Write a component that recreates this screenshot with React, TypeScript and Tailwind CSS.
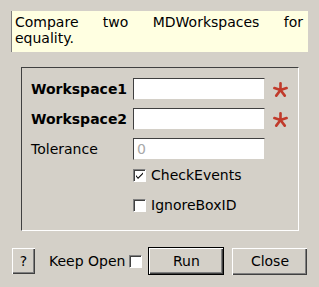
import React from "react";

const font = { fontFamily: '"DejaVu Sans", Verdana, sans-serif' };

function Asterisk() {
  return (
    <svg width="15" height="15" viewBox="0 0 16 16" className="ml-[8px]">
      <g stroke="#c13b2c" strokeWidth="2.8" strokeLinecap="round">
        <line x1="8" y1="8.5" x2="8" y2="1.5" />
        <line x1="8" y1="8.5" x2="1.5" y2="6.5" />
        <line x1="8" y1="8.5" x2="14.5" y2="6.5" />
        <line x1="8" y1="8.5" x2="3.5" y2="14.5" />
        <line x1="8" y1="8.5" x2="12.5" y2="14.5" />
      </g>
    </svg>
  );
}

function Check({ checked }: { checked?: boolean }) {
  return (
    <span className="flex h-[13px] w-[13px] items-center justify-center border border-t-[#808080] border-l-[#808080] border-b-white border-r-white bg-white shadow-[inset_1px_1px_0_#404040]">
      {checked && (
        <svg width="9" height="9" viewBox="0 0 9 9">
          <path d="M1 4 L3 6.5 L8 1.5 L8 3 L3 8 L1 5.5 Z" fill="#000" />
        </svg>
      )}
    </span>
  );
}

function Field({ label, bold, value, required }: { label: string; bold?: boolean; value?: string; required?: boolean }) {
  return (
    <div className="flex h-[22px] items-center">
      <span className={`w-[102px] text-[14px] text-black ${bold ? "font-bold" : ""}`}>{label}</span>
      <div className="flex h-[22px] w-[132px] items-center border border-t-[#404040] border-l-[#404040] border-b-[#d4d0c8] border-r-[#d4d0c8] bg-white pl-[3px] text-[14px] text-[#a8a8a8]">
        {value}
      </div>
      {required && <Asterisk />}
    </div>
  );
}

function Button({ children, width, primary }: { children: React.ReactNode; width: string; primary?: boolean }) {
  return (
    <button
      className={`flex items-center justify-center text-[14px] text-black ${width} ${
        primary
          ? "h-[28px] border border-black shadow-[inset_1px_1px_0_#fff,inset_-1px_-1px_0_#404040,inset_-2px_-2px_0_#808080]"
          : "h-[27px] shadow-[inset_1px_1px_0_#fff,inset_-1px_-1px_0_#404040,inset_-2px_-2px_0_#808080]"
      }`}
    >
      {children}
    </button>
  );
}

export default function App() {
  return (
    <div className="flex h-[287px] w-[319px] flex-col bg-[#d4d0c8] pt-[11px]" style={font}>
      <div className="ml-[11px] h-[41px] w-[297px] border-l border-[#808080] bg-[#ffffe1] pl-[3px] pr-[5px] pt-[3px] text-[14px] leading-[16px] text-black">
        <div className="flex justify-between">
          <span>Compare</span>
          <span>two</span>
          <span>MDWorkspaces</span>
          <span>for</span>
        </div>
        <div>equality.</div>
      </div>

      <div className="ml-[21px] mt-[15px] h-[164px] w-[278px] border border-t-[#404040] border-l-[#404040] border-b-white border-r-white pl-[9px] pt-[10px]">
        <div className="flex flex-col gap-[8px]">
          <Field label="Workspace1" bold required />
          <Field label="Workspace2" bold required />
          <Field label="Tolerance" value="0" />
        </div>
        <div className="mt-[4px] flex flex-col gap-[8px] pl-[102px]">
          <div className="flex h-[22px] items-center gap-[5px] text-[14px] text-black">
            <Check checked />
            <span>CheckEvents</span>
          </div>
          <div className="flex h-[22px] items-center gap-[5px] text-[14px] text-black">
            <Check />
            <span>IgnoreBoxID</span>
          </div>
        </div>
      </div>

      <div className="mt-[16px] flex items-center pl-[12px]">
        <Button width="w-[23px] !h-[26px]">?</Button>
        <span className="ml-[14px] text-[14px] text-black">Keep Open</span>
        <span className="ml-[4px]">
          <Check />
        </span>
        <span className="ml-[6px]">
          <Button width="w-[76px]" primary>Run</Button>
        </span>
        <span className="ml-[8px]">
          <Button width="w-[75px]">Close</Button>
        </span>
      </div>
    </div>
  );
}
